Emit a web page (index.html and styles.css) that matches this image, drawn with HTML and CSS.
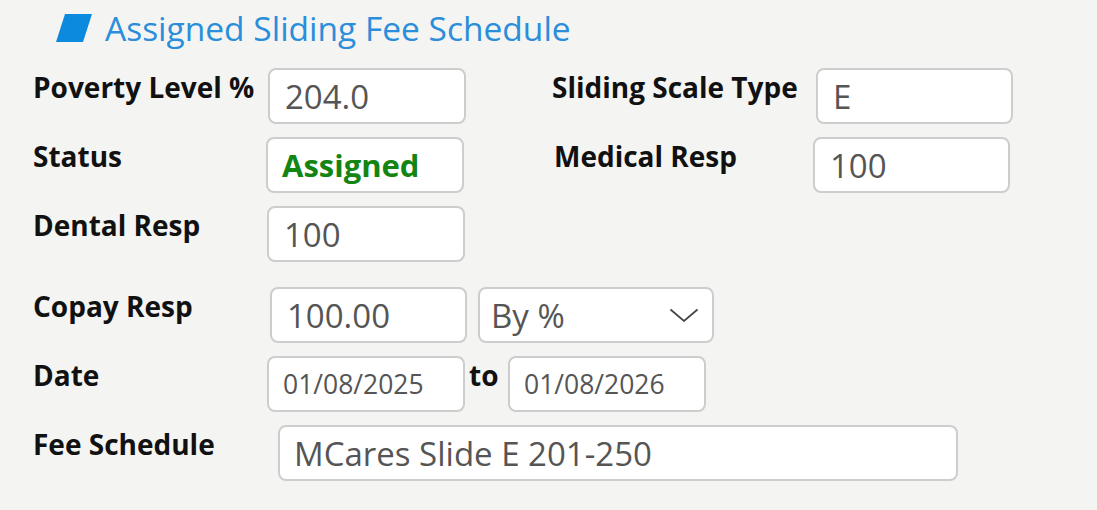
FILE: index.html
```html
<!DOCTYPE html>
<html>
<head>
<meta charset="utf-8">
<link rel="stylesheet" href="styles.css">
</head>
<body>
<div class="panel">
  <h2 class="title">
    <svg class="title-icon" width="38" height="30" viewBox="0 0 38 30"><polygon points="10,1 37,1 28,29 1,29" fill="#0b8ade"/></svg>
    <span>Assigned Sliding Fee Schedule</span>
  </h2>

  <div class="form">
    <div class="row">
      <div class="lbl">Poverty Level %</div>
      <div class="field field-pov">204.0</div>
      <div class="lbl lbl-right">Sliding Scale Type</div>
      <div class="field field-right">E</div>
    </div>

    <div class="row">
      <div class="lbl">Status</div>
      <div class="field field-status">Assigned</div>
      <div class="lbl lbl-right lbl-med">Medical Resp</div>
      <div class="field field-right">100</div>
    </div>

    <div class="row">
      <div class="lbl">Dental Resp</div>
      <div class="field">100</div>
    </div>

    <div class="row row-copay">
      <div class="lbl">Copay Resp</div>
      <div class="field field-copay">100.00</div>
      <div class="field select">
        <span>By %</span>
        <svg class="chev" width="30" height="14" viewBox="0 0 30 14"><polyline points="1.5,1.5 15,13 28.5,1.5" fill="none" stroke="#444" stroke-width="1.7"/></svg>
      </div>
    </div>

    <div class="row">
      <div class="lbl">Date</div>
      <div class="field field-date">01/08/2025</div>
      <div class="to">to</div>
      <div class="field field-date">01/08/2026</div>
    </div>

    <div class="row">
      <div class="lbl">Fee Schedule</div>
      <div class="field field-fee">MCares Slide E 201-250</div>
    </div>
  </div>
</div>
</body>
</html>
```

FILE: styles.css
```css
html, body {
  margin: 0;
  padding: 0;
  background: #f4f4f2;
}

.panel {
  font-family: "Open Sans", "Noto Sans", sans-serif;
  padding: 0 0 0 33px;
  width: 1064px;
  height: 510px;
  overflow: hidden;
}

.title {
  display: flex;
  align-items: center;
  margin: 0 0 0 22px;
  height: 55px;
  box-sizing: border-box;
  font-weight: 400;
  font-size: 33.5px;
  color: #2a8edb;
  gap: 12px;
}

.title-icon {
  flex: none;
}

.form {
  display: flex;
  flex-direction: column;
  gap: 13px;
  margin-top: 13px;
}

.row {
  display: flex;
  align-items: flex-start;
  height: 56px;
}

.row-copay {
  margin-top: 12px;
}

.lbl {
  width: 234px;
  flex: none;
  font-weight: 700;
  font-size: 28px;
  line-height: 38px;
  color: #111;
}

.lbl-right {
  width: 264px;
  margin-left: 86px;
}

.lbl-med {
  margin-left: 90px;
  width: 259px;
}

.field {
  box-sizing: border-box;
  width: 198px;
  height: 56px;
  border: 2px solid #cdcdcd;
  border-radius: 8px;
  background: #fff;
  display: flex;
  align-items: center;
  padding-left: 15px;
  font-size: 33px;
  color: #555;
  flex: none;
}

.field-pov {
  margin-left: 1px;
}

.field-right {
  width: 197px;
}

.field-status {
  margin-left: -1px;
  color: #138513;
  font-weight: 700;
  font-size: 31px;
  padding-left: 14px;
}

.field-copay {
  margin-left: 3px;
  width: 197px;
}

.select {
  width: 236px;
  margin-left: 11px;
  padding-left: 11px;
  padding-right: 13px;
  justify-content: space-between;
}

.chev {
  flex: none;
}

.field-date {
  font-size: 26.5px;
  padding-left: 14px;
}

.to {
  font-weight: 700;
  font-size: 28px;
  line-height: 38px;
  color: #111;
  width: 43px;
  padding-left: 4px;
  box-sizing: border-box;
}

.field-fee {
  width: 680px;
  margin-left: 11px;
  padding-left: 14px;
  font-size: 33px;
}
```
